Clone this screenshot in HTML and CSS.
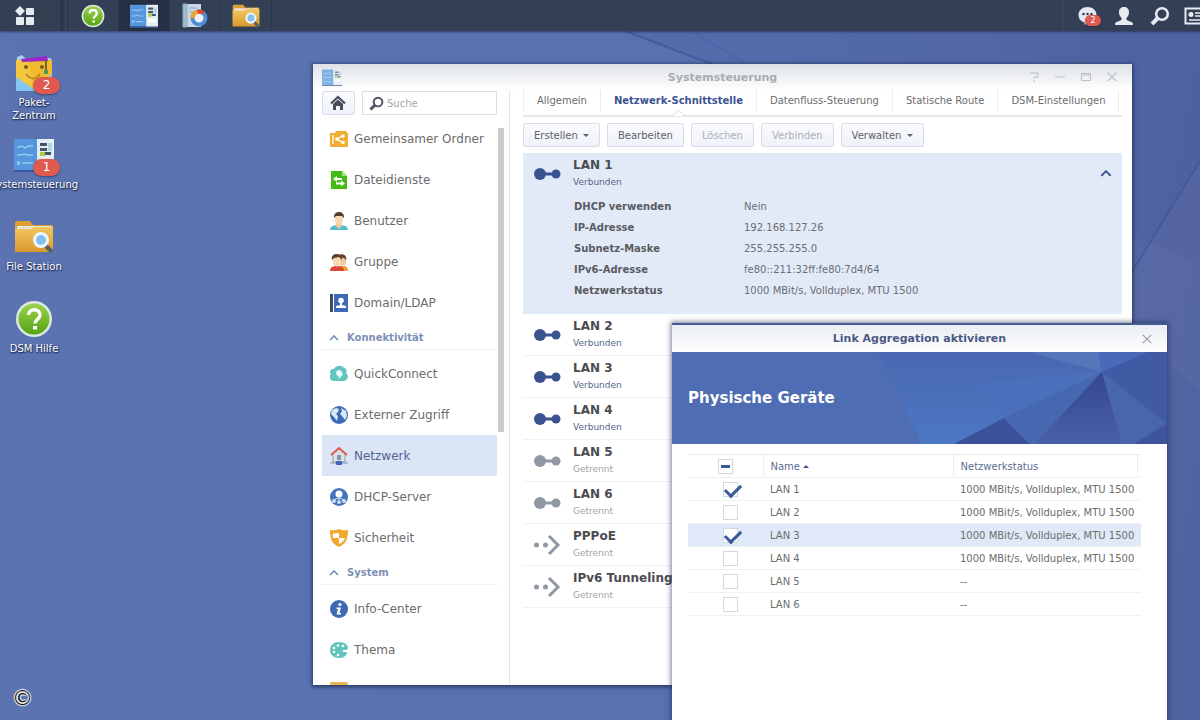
FILE: index.html
```html
<!DOCTYPE html>
<html lang="de">
<head>
  <meta charset="UTF-8" />
  <meta name="viewport" content="width=device-width, initial-scale=1.0"/>
  <title>Systemsteuerung</title>
  <link rel="stylesheet" href="styles.css">
</head>
<body>
  <!-- shared icons -->
  <svg class="defs" aria-hidden="true">
    <linearGradient id="green" x1="0" y1="0" x2="0" y2="1"><stop offset="0" stop-color="#9bd24e"/><stop offset="1" stop-color="#55a313"/></linearGradient>
    <linearGradient id="gold" x1="0" y1="0" x2="0" y2="1"><stop offset="0" stop-color="#f3c760"/><stop offset="1" stop-color="#d9982c"/></linearGradient>
    <symbol id="i-help" viewBox="0 0 38 38">
      <circle cx="19" cy="19" r="18" fill="#dbe9e2"/>
      <circle cx="19" cy="19" r="15.5" fill="url(#green)"/>
      <path d="M13.5 15c0-7 11.500-7 11.500 0 0 4-5 4.500-5 8.500" fill="none" stroke="#fff" stroke-width="3.400"/>
      <rect x="18" y="26" width="4" height="3.500" fill="#fff"/>
    </symbol>
    <symbol id="i-panel" viewBox="0 0 40 34">
      <rect x="0" y="1" width="23" height="31" fill="#5596dc"/>
      <path d="M0 32h40v2H0z" fill="#36589a"/>
      <rect x="23" y="1" width="17" height="31" fill="#e4eef5"/>
      <path d="M3 9h3l2-1 3 2 3-2h5M3 17h4l3-1 3 1h6M3 25h2m3 0h11" stroke="#93c9f2" stroke-width="1.500" fill="none"/>
      <path d="M3 23h3v4H3z" fill="#7cc7f5"/>
      <path d="M26 5h7v3h-7zM26 10h7v3h-7zM31 14h6v3h-6z" fill="#40566b"/>
      <path d="M34 5h4v8h-4z" fill="#b2d2e5"/>
      <path d="M26 14h5v4h-5z" fill="#a9cd3a"/>
      <path d="M26 21h11v5H26z" fill="#fff"/>
    </symbol>
    <symbol id="i-folder" viewBox="0 0 40 34">
      <path d="M1 3q0-2 2-2h13l3 4h19q1 0 1 2v24H1z" fill="#dc9f35"/>
      <path d="M3 6h34v8H3z" fill="#e6e3d8"/>
      <path d="M1 9h16l3-2h19v25H1z" fill="url(#gold)"/>
      <path d="M31 25l7 7" stroke="#555d66" stroke-width="4"/>
      <circle cx="27" cy="20" r="8" fill="#eef6fb"/>
      <circle cx="27" cy="20" r="5" fill="#83c1ec"/>
    </symbol>
    <symbol id="i-package" viewBox="0 0 38 38">
      <path d="M2 3l5-2 4 4 25-1v10H2z" fill="#9fd4f2"/>
      <path d="M1 6h36v19l-8 11H9L1 26z" fill="#f0bb2e"/>
      <path d="M1 6l12-1 6 30H1z" fill="#f7cf4c" opacity=".6"/>
      <path d="M1 23l18 12v2H1zM37 20L22 32l-3 5h18z" fill="#86c5ef"/>
      <path d="M6 5l26-3 1 5-26 1z" fill="#9a26c7"/>
      <path d="M31 6v13" stroke="#766425" stroke-width="2"/>
      <path d="M29 16h4v4h-4z" fill="#4d9a58"/>
      <circle cx="11" cy="13" r="2" fill="#775a18"/><circle cx="27" cy="13" r="2" fill="#775a18"/>
      <path d="M11 20q7 9 14 0" fill="none" stroke="#ba7e17" stroke-width="1.500"/>
    </symbol>
    <symbol id="i-monitor" viewBox="0 0 26 26">
      <path d="M1 1h18v23H1z" fill="#c7dae4"/>
      <path d="M1 1h4v23H1zM7 5h8M7 9h6" fill="#9fbdcd" stroke="#8babbd"/>
      <circle cx="17" cy="15" r="6.500" fill="#edf2f4" stroke="#4f8cda" stroke-width="4"/>
      <path d="M10.500 15a6.500 6.500 0 0 1 5-6.300" fill="none" stroke="#f0a32d" stroke-width="4"/>
      <path d="M15.500 8.700a6.500 6.500 0 0 1 6 1.500" fill="none" stroke="#df4538" stroke-width="4"/>
    </symbol>
    <symbol id="i-plug" viewBox="0 0 28 14">
      <circle cx="7" cy="7" r="6"/><circle cx="23" cy="7" r="4.500"/><path d="M7 5.500h16v3H7z"/>
    </symbol>
    <symbol id="i-dial" viewBox="0 0 28 22">
      <circle cx="3.500" cy="11" r="2.500"/><circle cx="12.500" cy="11" r="2.500"/>
      <path d="M16 2l9 9-9 9" fill="none" stroke="currentColor" stroke-width="3"/>
    </symbol>
    <symbol id="i-search" viewBox="0 0 20 20">
      <circle cx="12" cy="8" r="5.800" fill="none" stroke="currentColor" stroke-width="2.600"/>
      <path d="M8 12l-6 6" stroke="currentColor" stroke-width="4"/>
    </symbol>
    <symbol id="i-up" viewBox="0 0 10 6"><path d="M1 5l4-4 4 4" fill="none" stroke="currentColor" stroke-width="1.700"/></symbol>
    <symbol id="i-close" viewBox="0 0 12 12"><path d="M1 1l10 10M11 1L1 11" stroke="currentColor" stroke-width="1.500"/></symbol>
  </svg>

  <header class="taskbar">
    <button class="task menu" aria-label="Hauptmenü">
      <svg width="20" height="20" viewBox="0 0 20 20" fill="#e6ebf2"><path d="M5 0l5 5-5 5-5-5z"/><rect x="11" y="2" width="8" height="7" rx="1"/><rect x="1" y="11" width="8" height="8" rx="1"/><rect x="11" y="11" width="8" height="8" rx="1"/></svg>
    </button>
    <button class="task" aria-label="DSM Hilfe"><svg width="24" height="24"><use href="#i-help"/></svg></button>
    <button class="task active" aria-label="Systemsteuerung"><svg width="28" height="24"><use href="#i-panel"/></svg></button>
    <button class="task" aria-label="Ressourcen-Monitor"><svg width="26" height="26"><use href="#i-monitor"/></svg></button>
    <button class="task" aria-label="File Station"><svg width="28" height="24"><use href="#i-folder"/></svg></button>
    <div class="tray">
      <button class="tray-item" aria-label="Benachrichtigungen">
        <svg width="20" height="20" viewBox="0 0 20 20"><path d="M9.500 1C14.500 1 18.500 4.500 18.500 9s-4 8-9 8l-3 2v-2.500C3 15.500.5 12.500.5 9c0-4.500 4-8 9-8z" fill="#e6ebf2"/><g fill="#3b4759"><circle cx="5.500" cy="8" r="1.300"/><circle cx="9.500" cy="8" r="1.300"/><circle cx="13.500" cy="8" r="1.300"/></g></svg>
        <span class="badge small">2</span>
      </button>
      <button class="tray-item" aria-label="Benutzer">
        <svg width="20" height="20" viewBox="0 0 20 20" fill="#e6ebf2"><path d="M10 1c3 0 5 2 5 5s-1 4-2.500 6v2l6 2.500q.5 1 .5 2.500H1q0-1.500.500-2.500l6-2.500v-2C6 10 5 9 5 6s2-5 5-5z"/></svg>
      </button>
      <button class="tray-item light" aria-label="Suchen"><svg width="20" height="20"><use href="#i-search"/></svg></button>
      <button class="tray-item" aria-label="Widgets">
        <svg width="24" height="18" viewBox="0 0 24 18"><path d="M1.500 1.500h21v15h-21z" fill="none" stroke="#e6ebf2" stroke-width="2"/><circle cx="7" cy="7.500" r="2.500" fill="#e6ebf2"/><path d="M11 6h8M11 9h8M5 13h14" stroke="#e6ebf2" stroke-width="1.500"/></svg>
      </button>
    </div>
  </header>

  <main class="desktop">
    <svg class="wallpaper" viewBox="0 0 1200 689" preserveAspectRatio="none" aria-hidden="true">
      <path d="M625 0l110 42 465 190V0z" fill="#33498a" opacity=".13"/>
      <path d="M625 0l110 42" stroke="#394f91" stroke-width="2" opacity=".6"/>
      <path d="M690 0l35 20 35 22" fill="none" stroke="#4460a4" stroke-width="1"/>
      <path d="M1200 130l-92 150 92 80z" fill="#6672ad" opacity=".25"/>
      <path d="M1200 130l-78 127" stroke="#3f5390" stroke-width="2" opacity=".6"/>
    </svg>

    <nav class="shortcuts">
      <a class="shortcut" href="#">
        <span class="shortcut-icon"><svg width="38" height="38"><use href="#i-package"/></svg><span class="badge">2</span></span>
        <span>Paket-<br>Zentrum</span>
      </a>
      <a class="shortcut" href="#">
        <span class="shortcut-icon"><svg width="40" height="34"><use href="#i-panel"/></svg><span class="badge">1</span></span>
        <span>Systemsteuerung</span>
      </a>
      <a class="shortcut" href="#">
        <span class="shortcut-icon"><svg width="40" height="34"><use href="#i-folder"/></svg></span>
        <span>File Station</span>
      </a>
      <a class="shortcut" href="#">
        <span class="shortcut-icon"><svg width="38" height="38"><use href="#i-help"/></svg></span>
        <span>DSM Hilfe</span>
      </a>
    </nav>

    <section class="window">
      <div class="titlebar">
        <svg class="title-icon" width="20" height="17"><use href="#i-panel"/></svg>
        <h1>Systemsteuerung</h1>
        <div class="controls">
          <button aria-label="Hilfe"><svg width="10" height="10" viewBox="0 0 10 10"><path d="M1 1h8v4H5v2M5 8v2" fill="none" stroke="currentColor"/></svg></button>
          <button aria-label="Minimieren"><svg width="10" height="10" viewBox="0 0 10 10"><path d="M0 5h10" stroke="currentColor"/></svg></button>
          <button aria-label="Maximieren"><svg width="10" height="10" viewBox="0 0 10 10"><path d="M.5 1.500h9v7h-9zM0 3h10" fill="none" stroke="currentColor"/></svg></button>
          <button aria-label="Schließen"><svg width="10" height="10"><use href="#i-close"/></svg></button>
        </div>
      </div>

      <div class="window-body">
        <aside class="sidebar">
          <div class="search-row">
            <button class="btn home" aria-label="Startseite">
              <svg width="16" height="16" viewBox="0 0 16 16"><path d="M1 8.500L8 2l7 6.500" fill="none" stroke="#474e5b" stroke-width="2.200"/><path d="M3 9l5-4.500L13 9v6h-3v-4H6v4H3z" fill="#474e5b"/></svg>
            </button>
            <label class="search">
              <svg width="15" height="15"><use href="#i-search"/></svg>
              <input type="text" placeholder="Suche" aria-label="Suche">
            </label>
          </div>
          <div class="nav-scroll">
            <ul class="nav">
              <li><a href="#"><svg viewBox="0 0 18 18"><path d="M0 3h5l1-2h10l1 2h1v14H0z" fill="#f0ad31"/><path d="M3 5v9M13 5.500L7 9l6 4" stroke="#fff" stroke-width="1.300" fill="none"/><g fill="#fff"><circle cx="13" cy="6" r="1.800"/><circle cx="7" cy="9" r="1.800"/><circle cx="13" cy="12.500" r="1.800"/></g></svg>Gemeinsamer Ordner</a></li>
              <li><a href="#"><svg viewBox="0 0 18 18"><path d="M1 0h11l5 5v13H1z" fill="#45b914"/><path d="M12 0l5 5h-5z" fill="#a5e183"/><path d="M3 8l4-3v2h5v2H7v2zM15 12.500l-4 3v-2H6v-2h5v-2z" fill="#fff"/></svg>Dateidienste</a></li>
              <li><a href="#"><svg viewBox="0 0 18 18"><path d="M0 18c0-4 4-5 9-5s9 1 9 5z" fill="#55bfc6"/><path d="M6 11h6v3l-3 3-3-3z" fill="#f4cba0"/><path d="M5 3h8v5c0 6-8 6-8 0z" fill="#f9d9b4"/><path d="M4 6c-1-8 11-8 10 0l-2-2H6z" fill="#503b32"/></svg>Benutzer</a></li>
              <li><a href="#"><svg viewBox="0 0 18 18"><path d="M7 18c0-4 3-5 6-5s5 1 5 5z" fill="#f09a35"/><path d="M9 3h7v6c0 5-7 5-7 0z" fill="#f3c89b"/><path d="M8 4c1-5 10-3 8 3l-2-2z" fill="#65442c"/><path d="M0 18c0-4 3-5 7-5s7 1 7 5z" fill="#dd4836"/><path d="M3 4h8v5c0 6-8 6-8 0z" fill="#f9d9b4"/><path d="M2 7C0-1 13-1 12 7L9 4 4 5z" fill="#57402f"/></svg>Gruppe</a></li>
              <li><a href="#"><svg viewBox="0 0 18 18"><path d="M0 0h3v18H0z" fill="#3d4a62"/><path d="M4 0h14v18H4z" fill="#3d69b5"/><circle cx="11" cy="6.500" r="2.800" fill="#fff"/><path d="M10 8h2v3l4 1v2H6v-2l4-1z" fill="#fff"/></svg>Domain/LDAP</a></li>
            </ul>
            <h2 class="nav-group"><svg width="10" height="6"><use href="#i-up"/></svg>Konnektivität</h2>
            <ul class="nav">
              <li><a href="#"><svg viewBox="0 0 18 18"><path d="M4 16a4 4 0 0 1-3-7 3 3 0 0 1 3-5c2-4 8-4 10-1 3 0 3 4 2 5 4 3 1 8-3 8z" fill="#62c5c0"/><path d="M9 5a4 4 0 0 1 3 6l-4 3 1-3c-4 0-4-6 0-6z" fill="#e9fbf9"/></svg>QuickConnect</a></li>
              <li><a href="#"><svg viewBox="0 0 18 18"><circle cx="9" cy="9" r="9" fill="#3b69b4"/><path d="M2 4l4-2 3 1-1 3-2 2 2 2-1 5-3-4-3-3zM11 2l5 3 1 5-2 4-3-4-2-2 2-3z" fill="#d9e9f8"/></svg>Externer Zugriff</a></li>
              <li class="current"><a href="#"><svg viewBox="0 0 18 18"><path d="M3 7l6-5 6 5v8H3z" fill="#dce2e7" stroke="#929aa5"/><path d="M1 8l8-7 8 7" fill="none" stroke="#df6054" stroke-width="2"/><path d="M7 8h4v5H7z" fill="#8a94a2"/><path d="M0 16h18" stroke="#7e8fae"/><rect x="6" y="14" width="6" height="4" rx="1" fill="#3d65b7"/></svg>Netzwerk</a></li>
              <li><a href="#"><svg viewBox="0 0 18 18"><circle cx="9" cy="9" r="9" fill="#4473bd"/><circle cx="9" cy="6" r="3.500" fill="#fff"/><path d="M9 9v3M3 12l6-2 6 2" stroke="#c9dcf3" fill="none"/><g fill="#c9dcf3"><circle cx="4" cy="13" r="2"/><circle cx="9" cy="14" r="2"/><circle cx="14" cy="13" r="2"/></g></svg>DHCP-Server</a></li>
              <li><a href="#"><svg viewBox="0 0 18 18"><path d="M0 1q5 1 9-1 4 2 9 1c0 9-2 14-9 17C2 15 0 10 0 1z" fill="#f0a92e"/><path d="M9 4v5H3V4.500zM9 9h6c-1 3-3 4.500-6 6z" fill="#fff"/></svg>Sicherheit</a></li>
            </ul>
            <h2 class="nav-group"><svg width="10" height="6"><use href="#i-up"/></svg>System</h2>
            <ul class="nav">
              <li><a href="#"><svg viewBox="0 0 18 18"><circle cx="9" cy="9" r="9" fill="#3e69b5"/><circle cx="10" cy="4.500" r="1.600" fill="#fff"/><path d="M6.500 7.500H11L9.500 13H11v1.500H6.500L8 9H6.500z" fill="#fff"/></svg>Info-Center</a></li>
              <li><a href="#"><svg viewBox="0 0 18 18"><path d="M9 1c6 0 9 3 9 6 0 2-3 2-4 2-2 0-2 2 0 2h3c0 4-4 6-8 6-5 0-9-3-9-8s4-8 9-8z" fill="#62c5bb"/><g fill="#fff"><circle cx="4" cy="7" r="1.300"/><circle cx="8" cy="4.500" r="1.300"/><circle cx="13" cy="5" r="1.300"/><circle cx="4" cy="11" r="1.300"/><circle cx="8" cy="14" r="1.300"/></g></svg>Thema</a></li>
              <li><a href="#" aria-label="Regionale Optionen"><svg viewBox="0 0 18 18"><rect width="18" height="18" rx="2" fill="#e8b64e"/></svg></a></li>
            </ul>
          </div>
          <div class="scrollbar"></div>
        </aside>

        <div class="content">
          <nav class="tabs">
            <a href="#">Allgemein</a>
            <a href="#" class="selected">Netzwerk-Schnittstelle</a>
            <a href="#">Datenfluss-Steuerung</a>
            <a href="#">Statische Route</a>
            <a href="#">DSM-Einstellungen</a>
          </nav>
          <div class="toolbar">
            <button class="btn">Erstellen <i class="caret"></i></button>
            <button class="btn">Bearbeiten</button>
            <button class="btn" disabled>Löschen</button>
            <button class="btn" disabled>Verbinden</button>
            <button class="btn">Verwalten <i class="caret"></i></button>
          </div>

          <div class="interfaces">
            <article class="iface open">
              <svg class="iface-icon"><use href="#i-plug"/></svg>
              <div class="iface-text">
                <h3>LAN 1</h3>
                <p>Verbunden</p>
              </div>
              <button class="collapse" aria-label="Zuklappen"><svg width="12" height="7"><use href="#i-up"/></svg></button>
              <dl>
                <dt>DHCP verwenden</dt><dd>Nein</dd>
                <dt>IP-Adresse</dt><dd>192.168.127.26</dd>
                <dt>Subnetz-Maske</dt><dd>255.255.255.0</dd>
                <dt>IPv6-Adresse</dt><dd>fe80::211:32ff:fe80:7d4/64</dd>
                <dt>Netzwerkstatus</dt><dd>1000 MBit/s, Vollduplex, MTU 1500</dd>
              </dl>
            </article>
            <article class="iface"><svg class="iface-icon"><use href="#i-plug"/></svg><div class="iface-text"><h3>LAN 2</h3><p>Verbunden</p></div></article>
            <article class="iface"><svg class="iface-icon"><use href="#i-plug"/></svg><div class="iface-text"><h3>LAN 3</h3><p>Verbunden</p></div></article>
            <article class="iface"><svg class="iface-icon"><use href="#i-plug"/></svg><div class="iface-text"><h3>LAN 4</h3><p>Verbunden</p></div></article>
            <article class="iface off"><svg class="iface-icon"><use href="#i-plug"/></svg><div class="iface-text"><h3>LAN 5</h3><p>Getrennt</p></div></article>
            <article class="iface off"><svg class="iface-icon"><use href="#i-plug"/></svg><div class="iface-text"><h3>LAN 6</h3><p>Getrennt</p></div></article>
            <article class="iface off"><svg class="iface-icon"><use href="#i-dial"/></svg><div class="iface-text"><h3>PPPoE</h3><p>Getrennt</p></div></article>
            <article class="iface off"><svg class="iface-icon"><use href="#i-dial"/></svg><div class="iface-text"><h3>IPv6 Tunneling</h3><p>Getrennt</p></div></article>
          </div>
        </div>
      </div>
    </section>

    <section class="dialog" role="dialog" aria-labelledby="dialog-title">
      <div class="dialog-title">
        <h2 id="dialog-title">Link Aggregation aktivieren</h2>
        <button aria-label="Schließen"><svg width="10" height="10"><use href="#i-close"/></svg></button>
      </div>
      <div class="banner">
        <svg viewBox="0 0 495 92" preserveAspectRatio="xMaxYMid slice" aria-hidden="true">
          <defs>
            <linearGradient id="facet" x1="0" y1="0" x2="0" y2="1"><stop offset="0" stop-color="#4a67b0"/><stop offset="1" stop-color="#4c78c4"/></linearGradient>
            <linearGradient id="deep" x1="0" y1="0" x2="0" y2="1"><stop offset="0" stop-color="#34468f"/><stop offset="1" stop-color="#4761a8"/></linearGradient>
          </defs>
          <rect width="495" height="92" fill="#4f6db2"/>
          <path d="M206 0h289v92H249z" fill="url(#facet)"/>
          <path d="M356 0h70l4 20z" fill="#5377b8"/>
          <path d="M426 0h50l-46 20z" fill="#4a69bb"/>
          <path d="M332 66l-50 26h76z" fill="#3b5199"/>
          <path d="M430 20l-98 46-30-35z" fill="#4b70bb"/>
          <path d="M430 20l-98 46 26 26h4z" fill="#4768b0"/>
          <path d="M430 20l-68 72h88z" fill="url(#deep)"/>
          <path d="M430 20l46-20h19v92h-45z" fill="#415aa4"/>
          <path d="M430 20l20 72h12l33-20z" fill="#4865ad"/>
          <path d="M462 92l33-20v20z" fill="#3d549d"/>
        </svg>
        <h3>Physische Geräte</h3>
      </div>
      <table class="devices">
        <thead>
          <tr><th class="check"><input type="checkbox" class="partial" aria-label="Alle auswählen"></th><th class="name">Name <i class="caret up"></i></th><th>Netzwerkstatus</th><th class="end"></th></tr>
        </thead>
        <tbody>
          <tr><td class="check"><input type="checkbox" id="lan1" checked></td><td><label for="lan1">LAN 1</label></td><td colspan="2">1000 MBit/s, Vollduplex, MTU 1500</td></tr>
          <tr><td class="check"><input type="checkbox" id="lan2"></td><td><label for="lan2">LAN 2</label></td><td colspan="2">1000 MBit/s, Vollduplex, MTU 1500</td></tr>
          <tr class="hover"><td class="check"><input type="checkbox" id="lan3" checked></td><td><label for="lan3">LAN 3</label></td><td colspan="2">1000 MBit/s, Vollduplex, MTU 1500</td></tr>
          <tr><td class="check"><input type="checkbox" id="lan4"></td><td><label for="lan4">LAN 4</label></td><td colspan="2">1000 MBit/s, Vollduplex, MTU 1500</td></tr>
          <tr><td class="check"><input type="checkbox" id="lan5"></td><td><label for="lan5">LAN 5</label></td><td colspan="2">--</td></tr>
          <tr><td class="check"><input type="checkbox" id="lan6"></td><td><label for="lan6">LAN 6</label></td><td colspan="2">--</td></tr>
        </tbody>
      </table>
    </section>

    <span class="copyright">©</span>
  </main>
</body>
</html>
```
FILE: styles.css
```css
* {
  box-sizing: border-box;
}

body {
  margin: 0;
  height: 100vh;
  display: flex;
  flex-direction: column;
  overflow: hidden;
  font-family: "DejaVu Sans", Verdana, sans-serif;
  font-size: 10px;
  color: #6c6c6c;
}

h1, h2, h3, p, ul, dl, dd {
  margin: 0;
  padding: 0;
}

ul {
  list-style: none;
}

a {
  color: inherit;
  text-decoration: none;
}

button {
  font: inherit;
  color: inherit;
  padding: 0;
  border: none;
  background: none;
  cursor: pointer;
}

svg {
  display: block;
  flex: none;
}

.defs {
  position: absolute;
  width: 0;
  height: 0;
}

/* taskbar */
.taskbar {
  flex: none;
  height: 31px;
  display: flex;
  background: #333f54;
  box-shadow: 0 1px 2px rgba(20, 30, 60, 0.6);
  z-index: 1;
}

.task {
  width: 51px;
  display: flex;
  align-items: center;
  justify-content: center;
  border-right: 1px solid #2c3749;
}

.task.menu {
  width: 68px;
  padding-right: 18px;
  background: linear-gradient(to right, #343f54 60px, #273143 61px, #38445a 66px);
}

.task.active {
  background: #263043;
}

.tray {
  margin-left: auto;
  margin-right: -14px;
  padding-left: 7px;
  display: flex;
  border-left: 1px solid #3f4c62;
}

.tray-item {
  width: 36px;
  display: flex;
  align-items: center;
  justify-content: center;
  position: relative;
}

.tray-item.light {
  color: #e6ebf2;
}

.badge {
  position: absolute;
  right: -6px;
  bottom: -2px;
  width: 27px;
  height: 17px;
  border-radius: 9px;
  background: #e05a50;
  color: #fff;
  font-size: 12px;
  line-height: 17px;
  text-align: center;
  text-shadow: none;
  box-shadow: 0 1px 2px rgba(30, 30, 60, 0.5);
}

.badge.small {
  right: 5px;
  bottom: 5px;
  width: 16px;
  height: 11px;
  font-size: 8px;
  line-height: 11px;
}

/* desktop */
.desktop {
  flex: 1;
  position: relative;
  overflow: hidden;
  background: linear-gradient(100deg, #5b73b1, #5871af 60%, #5062a0);
}

.wallpaper {
  position: absolute;
  width: 100%;
  height: 100%;
}

.shortcuts {
  position: relative;
  padding-top: 23px;
  display: grid;
  grid-template-columns: 68px;
  grid-auto-rows: 82px;
}

.shortcut {
  min-width: 0;
  display: flex;
  flex-direction: column;
  align-items: center;
  gap: 4px;
  color: #fff;
  line-height: 13px;
  text-align: center;
  white-space: nowrap;
  text-shadow: 0 1px 2px #1c2850, 1px 1px 1px #2c3a68;
}

.shortcut-icon {
  position: relative;
  width: 40px;
  height: 38px;
  display: flex;
  align-items: center;
  justify-content: center;
}

/* control panel window */
.window {
  position: absolute;
  left: 313px;
  right: 68px;
  top: 33px;
  bottom: 35px;
  display: flex;
  flex-direction: column;
  background: #fff;
  box-shadow: 0 1px 4px 1px rgba(25, 35, 75, 0.75);
}

.titlebar {
  height: 26px;
  display: grid;
  grid-template-columns: 100px 1fr 94px;
  align-items: center;
  padding: 0 15px 0 9px;
  background: linear-gradient(#dde1e7, #fff);
  color: #a9acb3;
}

.title-icon {
  opacity: 0.7;
}

.titlebar h1 {
  font-size: 11px;
  text-align: center;
}

.controls {
  display: flex;
  justify-content: flex-end;
  gap: 16px;
  color: #bcbfc5;
}

.window-body {
  flex: 1;
  min-height: 0;
  display: flex;
}

.sidebar {
  flex: none;
  width: 197px;
  padding: 1px 5px 0 9px;
  border-right: 1px solid #e4e4e8;
  display: grid;
  grid-template-columns: 175px 6px;
  grid-template-rows: 24px 1fr;
  column-gap: 1px;
  row-gap: 3px;
}

.search-row {
  grid-area: 1 / 1;
  display: flex;
  gap: 7px;
}

.btn {
  height: 24px;
  padding: 0 10px;
  border: 1px solid #dadde8;
  border-radius: 2px;
  background: linear-gradient(#fafbfe, #eff2f9);
  color: #5f6168;
}

.btn:disabled {
  color: #aeb0b8;
}

.btn.home {
  width: 33px;
  padding: 0 7px;
}

.search {
  flex: 1;
  display: flex;
  align-items: center;
  gap: 3px;
  padding-left: 6px;
  border: 1px solid #dadde4;
  color: #4d5361;
}

.search input {
  width: 100%;
  min-width: 0;
  padding: 0;
  border: none;
  outline: none;
  background: none;
  font: inherit;
}

.search input::placeholder {
  color: #a5a5a8;
}

.nav-scroll {
  grid-area: 2 / 1;
  min-height: 0;
  overflow: hidden;
}

.nav a {
  height: 41px;
  display: flex;
  align-items: center;
  gap: 6px;
  padding-left: 8px;
  font-size: 12px;
  white-space: nowrap;
}

.nav svg {
  width: 18px;
  height: 18px;
}

.nav .current {
  background: #dae6f6;
  color: #50658f;
}

.nav-group {
  height: 27px;
  margin-bottom: 3px;
  padding: 3px 0 0 7px;
  display: flex;
  align-items: center;
  gap: 8px;
  border-bottom: 1px solid #eef0f4;
  font-size: 10px;
  color: #7d90b5;
}

.scrollbar {
  grid-area: 2 / 2;
  height: 304px;
  margin-top: 10px;
  background: #cbcbcd;
}

.content {
  flex: 1;
  min-width: 0;
  padding: 0 10px 0 13px;
}

.tabs {
  display: flex;
  height: 27px;
  padding-bottom: 3px;
  border-bottom: 2px solid #e6e7ea;
}

.tabs a {
  padding: 0 13px;
  line-height: 22px;
  white-space: nowrap;
  border-left: 1px solid #ebecef;
}

.tabs a:last-child {
  border-right: 1px solid #ebecef;
}

.tabs .selected {
  position: relative;
  font-weight: bold;
  color: #3b5290;
}

/* notch in the line below the open tab */
.tabs .selected::after {
  content: "";
  position: absolute;
  left: 50%;
  bottom: -8px;
  width: 8px;
  height: 8px;
  margin-left: -4px;
  background: linear-gradient(135deg, #fff 50%, transparent 50%);
  border: solid #e0e2e6;
  border-width: 1px 0 0 1px;
  transform: rotate(45deg);
}

.toolbar {
  display: flex;
  gap: 7px;
  padding: 6px 0;
}

.caret {
  display: inline-block;
  margin-left: 2px;
  vertical-align: middle;
  border: 3px solid transparent;
  border-top-color: currentColor;
  border-bottom: none;
}

.caret.up {
  margin-left: 0;
  border-top: none;
  border-bottom: 3px solid #3b5290;
}

.iface {
  height: 42px;
  display: grid;
  grid-template-columns: 40px 1fr auto;
  padding: 4px 10px 0;
  border-bottom: 1px solid #eff0f3;
  color: #56648c;
}

.iface.open {
  height: 161px;
  grid-template-rows: 33px auto;
  align-content: start;
  background: #e2eaf8;
  border: none;
}

.iface-icon {
  width: 28px;
  height: 22px;
  margin-top: 6px;
  fill: #3b5290;
}

.iface h3 {
  font-size: 12px;
  line-height: 17px;
  color: #4b4c50;
}

.iface p {
  font-size: 9px;
  line-height: 16px;
}

.iface.off {
  color: #a2a3a7;
}

.iface.off .iface-icon {
  fill: #8f98a3;
  color: #8f98a3;
}

.collapse {
  color: #3b5290;
}

.iface dl {
  grid-column: 2 / 4;
  display: grid;
  grid-template-columns: 170px 1fr;
  padding: 6px 0 0 1px;
  line-height: 21px;
  color: #6b6d73;
}

.iface dt {
  font-weight: bold;
  color: #595b61;
}

/* link aggregation dialog */
.dialog {
  position: absolute;
  left: 672px;
  right: 33px;
  top: 292px;
  bottom: -40px;
  background: #fff;
  border-top: 2px solid #435a92;
  box-shadow: 0 0 5px 1px rgba(25, 35, 75, 0.6);
}

.dialog-title {
  height: 27px;
  display: grid;
  grid-template-columns: 40px 1fr 40px;
  align-items: center;
  background: linear-gradient(#eaedf2, #fff);
}

.dialog-title h2 {
  grid-column: 2;
  font-size: 11px;
  text-align: center;
  color: #4a5a85;
}

.dialog-title button {
  justify-self: center;
  color: #9c9fa8;
}

.banner {
  position: relative;
  height: 92px;
  display: flex;
  align-items: center;
  padding-left: 16px;
  background: #4f6db2;
}

.banner svg {
  position: absolute;
  left: 0;
  top: 0;
  width: 100%;
  height: 100%;
}

.banner h3 {
  position: relative;
  font-size: 15px;
  color: #fff;
}

.devices {
  width: calc(100% - 42px);
  margin: 10px 26px 0 16px;
  border-collapse: collapse;
  table-layout: fixed;
  border-top: 1px solid #e9ebef;
}

.devices tr {
  height: 23px;
  border-bottom: 1px solid #eef0f3;
}

.devices th,
.devices td {
  padding: 0 0 0 7px;
  font-weight: normal;
  text-align: left;
  white-space: nowrap;
}

.devices th {
  color: #5b6b93;
}

.devices th + th {
  border-left: 1px solid #eceef2;
}

.devices .check {
  width: 75px;
  padding-left: 35px;
}

.devices th.check {
  padding-left: 30px;
}

.devices .name {
  width: 190px;
}

.devices .end {
  width: 4px;
  padding: 0;
}

.devices .hover {
  background: #e0e9f8;
}

.devices input {
  appearance: none;
  display: block;
  position: relative;
  width: 15px;
  height: 15px;
  margin: 0;
  background: #fff;
  border: 1px solid #d3d8e2;
}

.devices input:checked::before {
  content: "";
  position: absolute;
  left: 1px;
  top: 1px;
  width: 13px;
  height: 7px;
  border: solid #3b5a9a;
  border-width: 0 0 3px 3px;
  transform: rotate(-45deg);
}

.devices .partial::before {
  content: "";
  position: absolute;
  left: 2px;
  top: 5px;
  width: 9px;
  height: 3px;
  background: #3b5a9a;
}

.copyright {
  position: absolute;
  left: 12px;
  bottom: 10px;
  font-size: 21px;
  line-height: 24px;
  color: #111;
  text-shadow: 1px 0 1px #fff, -1px 0 1px #fff, 0 1px 1px #fff, 0 -1px 1px #fff;
}
```
